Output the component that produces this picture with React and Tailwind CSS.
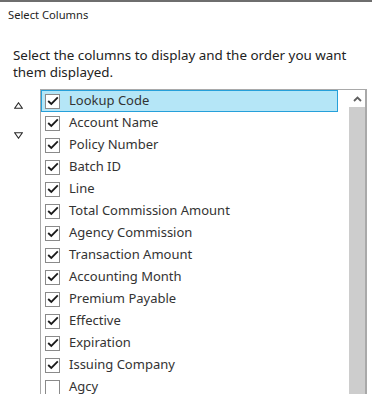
import { useState } from 'react';

const columns = [
  { name: 'Lookup Code', checked: true },
  { name: 'Account Name', checked: true },
  { name: 'Policy Number', checked: true },
  { name: 'Batch ID', checked: true },
  { name: 'Line', checked: true },
  { name: 'Total Commission Amount', checked: true },
  { name: 'Agency Commission', checked: true },
  { name: 'Transaction Amount', checked: true },
  { name: 'Accounting Month', checked: true },
  { name: 'Premium Payable', checked: true },
  { name: 'Effective', checked: true },
  { name: 'Expiration', checked: true },
  { name: 'Issuing Company', checked: true },
  { name: 'Agcy', checked: false },
];

function CheckBox({ checked }) {
  return (
    <span className="flex h-[15px] w-[15px] shrink-0 items-center justify-center border border-[#8a8a8a] bg-white">
      {checked && (
        <svg width="12" height="10" viewBox="0 0 12 10">
          <path d="M1.2 5 L4.3 8 L10.8 1.4" fill="none" stroke="#1a1a1a" strokeWidth="1.8" />
        </svg>
      )}
    </span>
  );
}

export default function App() {
  const [items, setItems] = useState(columns);
  const [selected, setSelected] = useState(0);

  const toggle = (idx) => {
    setItems(prev => prev.map((c, i) => (i === idx ? { ...c, checked: !c.checked } : c)));
  };

  return (
    <div
      className="h-[394px] w-[372px] overflow-hidden border-t-2 border-[#6e6e6e] bg-white text-[#1e1e1e]"
      style={{ fontFamily: '"Noto Sans", "Open Sans", sans-serif' }}
    >
      <div className="pl-2 pt-[5px] text-[11.2px] leading-[16px]">Select Columns</div>

      <p className="mt-[24px] pl-[13px] pr-2 text-[13.4px] leading-[17px] text-[#222]">
        Select the columns to display and the order you want them displayed.
      </p>

      <div className="mt-[8px] flex">
        {/* move up / down */}
        <div className="flex w-10 shrink-0 flex-col items-center pr-[4px] pt-[11px]">
          <button className="flex h-[10px] w-[10px] items-center justify-center">
            <svg width="9" height="7" viewBox="0 0 9 7">
              <path d="M4.5 0.8 L8.3 6.3 L0.7 6.3 Z" fill="none" stroke="#2b2b2b" strokeWidth="1.1" />
            </svg>
          </button>
          <button className="mt-[20px] flex h-[10px] w-[10px] items-center justify-center">
            <svg width="9" height="7" viewBox="0 0 9 7">
              <path d="M0.7 0.7 L8.3 0.7 L4.5 6.2 Z" fill="none" stroke="#2b2b2b" strokeWidth="1.1" />
            </svg>
          </button>
        </div>

        {/* list box */}
        <div className="flex h-[320px] w-[327px] border border-r-2 border-[#a9a9a9]">
          <div className="flex-1 pr-[11px]">
            {items.map((c, i) => (
              <div
                key={c.name}
                onClick={() => setSelected(i)}
                className={`flex h-[22px] items-center gap-[9px] pl-[3px] text-[13px] ${
                  selected === i ? 'border border-[#26a0da] bg-[#b5e6f7]' : 'border border-transparent'
                }`}
              >
                <span onClick={() => toggle(i)}>
                  <CheckBox checked={c.checked} />
                </span>
                <span className="text-[#333]">{c.name}</span>
              </div>
            ))}
          </div>

          {/* scrollbar */}
          <div className="flex w-[16px] shrink-0 flex-col">
            <div className="flex h-[17px] items-center justify-center">
              <svg width="9" height="6" viewBox="0 0 9 6">
                <path d="M1 5 L4.5 1.5 L8 5" fill="none" stroke="#606060" strokeWidth="1.8" />
              </svg>
            </div>
            <div className="flex-1 bg-[#cdcdcd]" />
          </div>
        </div>
      </div>
    </div>
  );
}
